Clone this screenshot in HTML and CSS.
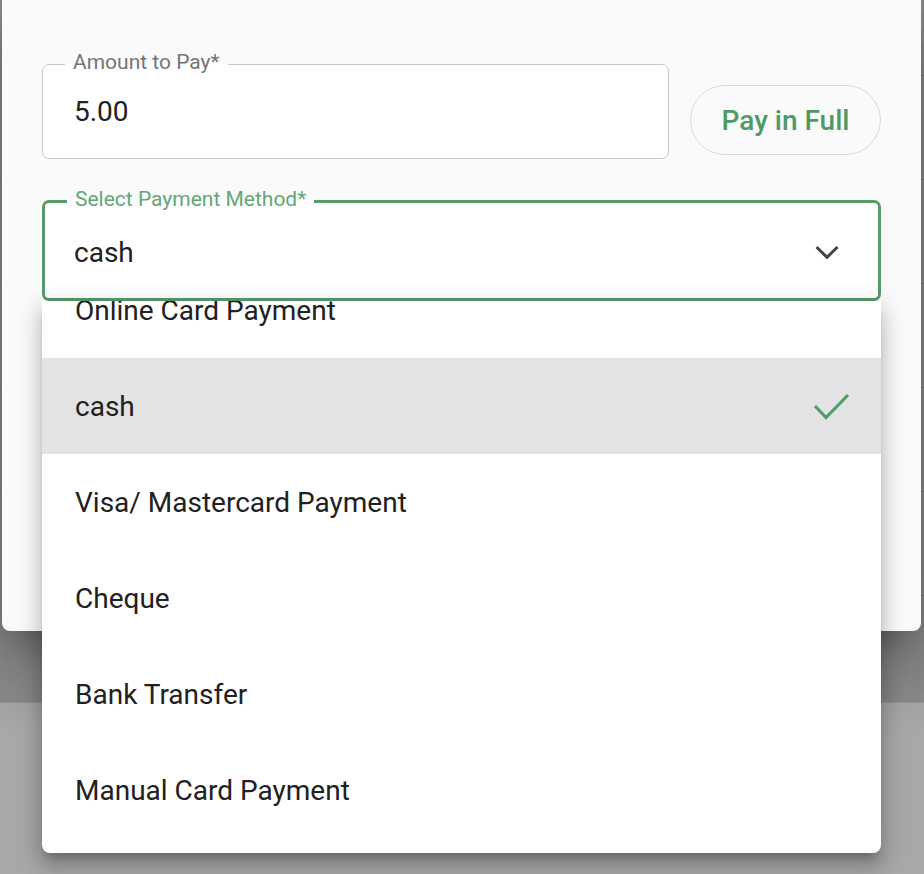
FILE: index.html
```html
<!DOCTYPE html>
<html lang="en">
<head>
<meta charset="utf-8">
<title>Payment</title>
<link rel="stylesheet" href="styles.css">
</head>
<body>
<div class="backdrop">
  <div class="backdrop-top">
    <div class="bg-row bg-row-first"></div>
    <div class="bg-row"></div>
    <div class="bg-row"></div>
    <div class="bg-row"></div>
    <div class="bg-row"></div>
    <div class="bg-row"></div>
    <div class="bg-row bg-row-last"></div>
  </div>
  <div class="backdrop-bottom"></div>
</div>

<div class="dialog">
  <div class="amount-row">
    <fieldset class="field amount-field">
      <legend class="field-label">Amount to Pay*</legend>
      <div class="field-value amount-value">5.00</div>
    </fieldset>
    <button class="pay-full" type="button">Pay in Full</button>
  </div>

  <div class="select-wrap">
    <fieldset class="field select-field">
      <legend class="field-label select-label">Select Payment Method*</legend>
      <div class="select-inner">
        <span class="field-value">cash</span>
        <svg class="chevron" width="24" height="14" viewBox="0 0 24 14" aria-hidden="true">
          <path d="M1.5 2 L12 12.3 L22.5 2" fill="none" stroke="#444" stroke-width="3"/>
        </svg>
      </div>
    </fieldset>

    <div class="menu">
      <ul class="menu-list">
        <li class="menu-item">Online Card Payment</li>
        <li class="menu-item selected">cash
          <svg class="check" width="38" height="29" viewBox="0 0 38 29" aria-hidden="true">
            <path d="M2 14 L13 25.5 L35 3" fill="none" stroke="#4f9d68" stroke-width="3.2"/>
          </svg>
        </li>
        <li class="menu-item">Visa/ Mastercard Payment</li>
        <li class="menu-item">Cheque</li>
        <li class="menu-item">Bank Transfer</li>
        <li class="menu-item">Manual Card Payment</li>
      </ul>
    </div>
  </div>
</div>
</body>
</html>
```

FILE: styles.css
```css
* {
  box-sizing: border-box;
}

html, body {
  margin: 0;
  padding: 0;
  height: 874px;
  overflow: hidden;
}

body {
  font-family: Roboto, "Noto Sans", "Liberation Sans", sans-serif;
  background: #a7a7a7;
  position: relative;
}

/* dimmed page behind the dialog */
.backdrop {
  display: flex;
  flex-direction: column;
}

.backdrop-top {
  background: #8b8b8b;
  display: flex;
  flex-direction: column;
}

.bg-row {
  height: 104px;
  border-bottom: 1px solid #7d7d7d;
}

.bg-row-first {
  height: 76px;
}

.bg-row-last {
  height: 107px;
  border-bottom: 1px solid #959595;
}

.backdrop-bottom {
  flex: 1;
  background: #a7a7a7;
}

/* dialog */
.dialog {
  position: absolute;
  left: 2px;
  top: 0;
  width: 919px;
  height: 631px;
  background: #fafafa;
  border-radius: 0 0 8px 8px;
  padding: 52px 40px 0;
  box-shadow: 0 19px 26px -12px rgba(0, 0, 0, 0.22),
              0 40px 64px 5px rgba(0, 0, 0, 0.14),
              0 15px 78px 14px rgba(0, 0, 0, 0.12);
}

.amount-row {
  display: flex;
  align-items: flex-start;
  gap: 21px;
}

.field {
  margin: 0;
  min-width: 0;
  background: #fff;
  border-radius: 7px;
}

.field-label {
  font-size: 21px;
  line-height: 21px;
  padding: 0 8px 4px;
  margin-left: -9px;
  color: #757575;
  white-space: nowrap;
}

.field-value {
  font-size: 28px;
  color: #212121;
}

.amount-field {
  flex: 1;
  border: 1px solid #c8c8c8;
  padding: 0 31px 11px;
}

.amount-value {
  line-height: 70px;
}

.pay-full {
  width: 191px;
  height: 70px;
  margin-top: 33px;
  border: 1.5px solid #dadada;
  border-radius: 35px;
  background: transparent;
  color: #4e9a67;
  font-family: Roboto, "Noto Sans", "Liberation Sans", sans-serif;
  font-size: 28px;
  font-weight: 500;
  padding: 0;
  display: flex;
  align-items: center;
  justify-content: center;
}

.select-wrap {
  position: relative;
  margin-top: 30px;
}

.select-field {
  border: 3px solid #559c6b;
  padding: 0 39px 8px 29px;
}

.select-label {
  color: #62a877;
  margin-left: -7px;
}

.select-inner {
  height: 76px;
  display: flex;
  align-items: center;
  justify-content: space-between;
}

.chevron {
  display: block;
}

/* dropdown menu */
.menu {
  position: absolute;
  top: 100%;
  left: 0;
  right: 0;
  height: 552px;
  background: #fff;
  border-radius: 0 0 8px 8px;
  overflow: hidden;
  z-index: 2;
  box-shadow: 0 9px 9px -5px rgba(0, 0, 0, 0.2),
              0 14px 18px 2px rgba(0, 0, 0, 0.14),
              0 5px 25px 4px rgba(0, 0, 0, 0.12);
}

.menu-list {
  list-style: none;
  margin: -39px 0 0;
  padding: 0;
}

.menu-item {
  height: 96px;
  display: flex;
  align-items: center;
  justify-content: space-between;
  padding: 0 30px 0 33px;
  font-size: 28px;
  color: #212121;
}

.menu-item.selected {
  background: #e3e3e3;
}

.check {
  display: block;
}
```
